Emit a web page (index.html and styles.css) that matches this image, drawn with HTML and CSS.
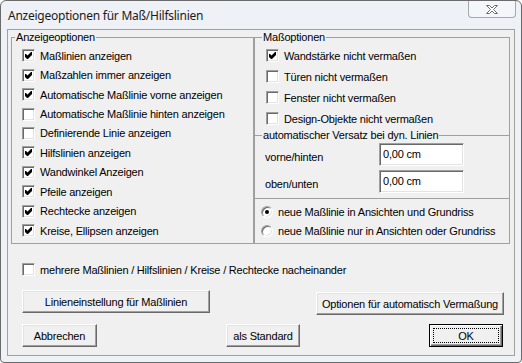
FILE: index.html
```html
<!DOCTYPE html>
<html lang="de">
<head>
    <meta charset="UTF-8">
    <meta name="viewport" content="width=device-width, initial-scale=1.0">
    <title>Anzeigeoptionen für Maß/Hilfslinien</title>
    <link rel="stylesheet" href="styles.css">
</head>
<body>
    <div class="window">
        <div class="titlebar">
            <span class="title">Anzeigeoptionen für Maß/Hilfslinien</span>
            <button class="close" type="button" aria-label="Schließen">
                <svg width="14" height="11" viewBox="0 0 14 11">
                    <path d="M1.5 1.5h3l2.5 2.5l2.5-2.5h3l-4 4l4 4h-3l-2.5-2.5l-2.5 2.5h-3l4-4z" fill="#fff" stroke="#6c6c6c" stroke-width="1" stroke-linejoin="round"/>
                </svg>
            </button>
        </div>

        <div class="client">
            <div class="groups">
                <fieldset class="group group-left">
                    <legend>Anzeigeoptionen</legend>
                    <div class="rows rows-left">
                        <label class="check"><span class="box on"></span>Maßlinien anzeigen</label>
                        <label class="check"><span class="box on"></span>Maßzahlen immer anzeigen</label>
                        <label class="check"><span class="box on"></span>Automatische Maßlinie vorne anzeigen</label>
                        <label class="check"><span class="box"></span>Automatische Maßlinie hinten anzeigen</label>
                        <label class="check"><span class="box"></span>Definierende Linie anzeigen</label>
                        <label class="check"><span class="box on"></span>Hilfslinien anzeigen</label>
                        <label class="check"><span class="box on"></span>Wandwinkel Anzeigen</label>
                        <label class="check"><span class="box on"></span>Pfeile anzeigen</label>
                        <label class="check"><span class="box on"></span>Rechtecke anzeigen</label>
                        <label class="check"><span class="box on"></span>Kreise, Ellipsen anzeigen</label>
                    </div>
                </fieldset>

                <fieldset class="group group-right">
                    <legend>Maßoptionen</legend>
                    <div class="rows rows-right">
                        <label class="check"><span class="box on"></span>Wandstärke nicht vermaßen</label>
                        <label class="check"><span class="box"></span>Türen nicht vermaßen</label>
                        <label class="check"><span class="box"></span>Fenster nicht vermaßen</label>
                        <label class="check"><span class="box"></span>Design-Objekte nicht vermaßen</label>
                    </div>

                    <fieldset class="sub">
                        <legend>automatischer Versatz bei dyn. Linien</legend>
                        <div class="offsets">
                            <span class="offset-label">vorne/hinten</span>
                            <input class="edit" type="text" value="0,00 cm">
                            <span class="offset-label">oben/unten</span>
                            <input class="edit" type="text" value="0,00 cm">
                        </div>
                    </fieldset>

                    <div class="radios">
                        <label class="radio"><span class="dot on"></span>neue Maßlinie in Ansichten und Grundriss</label>
                        <label class="radio"><span class="dot"></span>neue Maßlinie nur in Ansichten oder Grundriss</label>
                    </div>
                </fieldset>
            </div>

            <label class="check check-multi"><span class="box"></span>mehrere Maßlinien / Hilfslinien / Kreise / Rechtecke nacheinander</label>

            <div class="btn-row btn-row-top">
                <button class="btn btn-wide" type="button">Linieneinstellung für Maßlinien</button>
                <button class="btn btn-wide btn-low" type="button">Optionen für automatisch Vermaßung</button>
            </div>

            <div class="btn-row btn-row-bottom">
                <button class="btn btn-cancel" type="button">Abbrechen</button>
                <button class="btn btn-small" type="button">als Standard</button>
                <button class="btn btn-small btn-default" type="button"><span class="focus">OK</span></button>
            </div>
        </div>
    </div>
</body>
</html>
```

FILE: styles.css
```css
* {
    box-sizing: border-box;
}
body {
    margin: 0;
    background: #fff;
    font-family: "Liberation Sans", Arial, sans-serif;
    font-size: 11px;
    letter-spacing: -0.2px;
    color: #000;
}
.window {
    width: 522px;
    height: 363px;
    border: 1px solid #6b6b6b;
    border-radius: 6px 6px 4px 4px;
    background: #eef1f5;
    display: flex;
    flex-direction: column;
}
.titlebar {
    height: 28px;
    flex: none;
    display: flex;
    align-items: flex-start;
    padding-left: 7px;
}
.title {
    font-family: "Noto Sans", "Open Sans", sans-serif;
    font-size: 12px;
    letter-spacing: -0.25px;
    line-height: 16px;
    margin-top: 7px;
    color: #1b1b1b;
}
.close {
    margin-left: auto;
    margin-right: 5px;
    width: 48px;
    height: 17px;
    padding: 0;
    border: 1px solid #a4a9b0;
    border-top: none;
    border-radius: 0 0 4px 4px;
    background: #f4f6f9;
    display: flex;
    align-items: center;
    justify-content: center;
}

/* client area */
.client {
    flex: 1;
    margin: 0 6px 6px 6px;
    border: 1px solid #a0a0a0;
    background: #f0f0f0;
    padding: 1px 4px 0 3px;
    display: flex;
    flex-direction: column;
}
.groups {
    display: flex;
    height: 213px;
    flex: none;
}
.group {
    margin: 0;
    padding: 0;
    min-width: 0;
    border: 1px solid #a0a0a0;
}
.group legend,
.sub legend {
    padding: 0 1px;
    line-height: 13px;
    font-size: 11px;
}
.group-left {
    width: 243px;
    flex: none;
}
.group-left legend {
    margin-left: 3px;
}
.group-right {
    flex: 1;
    display: flex;
    flex-direction: column;
}
.group-right legend {
    margin-left: 7px;
}

/* checkboxes */
.check {
    display: flex;
    align-items: center;
    gap: 5px;
    white-space: nowrap;
}
.rows-left {
    padding: 2px 0 0 10px;
}
.rows-left .check {
    height: 19.44px;
}
.rows-right {
    padding: 1px 0 0 11px;
}
.rows-right .check {
    height: 21px;
}
.box {
    width: 13px;
    height: 13px;
    flex: none;
    background: #fff;
    border: 1px solid;
    border-color: #a0a0a0 #fff #fff #a0a0a0;
    box-shadow: inset 1px 1px #696969, inset -1px -1px #e3e3e3;
    position: relative;
}
.box.on::after {
    content: "";
    position: absolute;
    left: 2px;
    top: 2px;
    width: 7px;
    height: 7px;
    background: url("data:image/svg+xml,%3Csvg xmlns='http://www.w3.org/2000/svg' width='7' height='7' viewBox='0 0 7 7'%3E%3Cpath d='M0 2L1 2L2.5 3.5L6 0L7 0L7 3L3 7L2 7L0 5Z' fill='%23000'/%3E%3C/svg%3E") no-repeat;
}

/* offset sub group */
.sub {
    margin: 0;
    padding: 0;
    min-width: 0;
    border: none;
    border-top: 1px solid #a0a0a0;
    border-bottom: 1px solid #a0a0a0;
}
.sub legend {
    margin-left: 7px;
}
.offsets {
    display: grid;
    grid-template-columns: 114px 85px;
    row-gap: 4px;
    padding: 1px 0 5px 10px;
    align-items: center;
}
.offset-label {
    padding-top: 4px;
}
.edit {
    width: 85px;
    height: 23px;
    margin: 0;
    padding: 0 2px 2px 3px;
    font-family: inherit;
    font-size: 11px;
    letter-spacing: -0.2px;
    color: #000;
    background: #fff;
    border: 1px solid;
    border-color: #a0a0a0 #fff #fff #a0a0a0;
    box-shadow: inset 1px 1px #696969, inset -1px -1px #e3e3e3;
    outline: none;
}

/* radios */
.radios {
    padding: 3px 0 0 6px;
}
.radio {
    display: flex;
    align-items: center;
    gap: 5px;
    height: 19px;
    white-space: nowrap;
}
.dot {
    width: 12px;
    height: 12px;
    flex: none;
    border-radius: 50%;
    background: #fff;
    border: 1px solid;
    border-color: #a0a0a0 #fff #fff #a0a0a0;
    box-shadow: inset 1px 1px #696969, inset -1px -1px #e3e3e3;
    display: flex;
    align-items: center;
    justify-content: center;
}
.dot.on::after {
    content: "";
    width: 4px;
    height: 4px;
    border-radius: 50%;
    background: #000;
}

/* bottom part */
.check-multi {
    height: 19px;
    margin-top: 16px;
    padding-left: 11px;
}
.btn-row {
    display: flex;
    justify-content: space-between;
    align-items: flex-start;
    padding-left: 11px;
}
.btn-row-top {
    margin-top: 11px;
    padding-right: 6px;
}
.btn-row-bottom {
    margin-top: 9px;
    padding-right: 7px;
}
.btn {
    height: 23px;
    padding: 0;
    font-family: inherit;
    font-size: 11px;
    letter-spacing: -0.2px;
    color: #000;
    background: #f0f0f0;
    border: 1px solid;
    border-color: #fff #696969 #696969 #fff;
    box-shadow: inset -1px -1px #a0a0a0, inset 1px 1px #e3e3e3;
}
.btn-wide {
    width: 188px;
}
.btn-low {
    margin-top: 2px;
}
.btn-cancel {
    width: 75px;
}
.btn-small {
    width: 74px;
}
.btn-default {
    border-color: #000;
    box-shadow: inset 1px 1px #fff, inset -1px -1px #696969, inset -2px -2px #a0a0a0;
    display: flex;
    padding: 3px;
}
.btn-default .focus {
    flex: 1;
    height: 100%;
    border: 1px dotted #000;
    display: flex;
    align-items: center;
    justify-content: center;
}
```
